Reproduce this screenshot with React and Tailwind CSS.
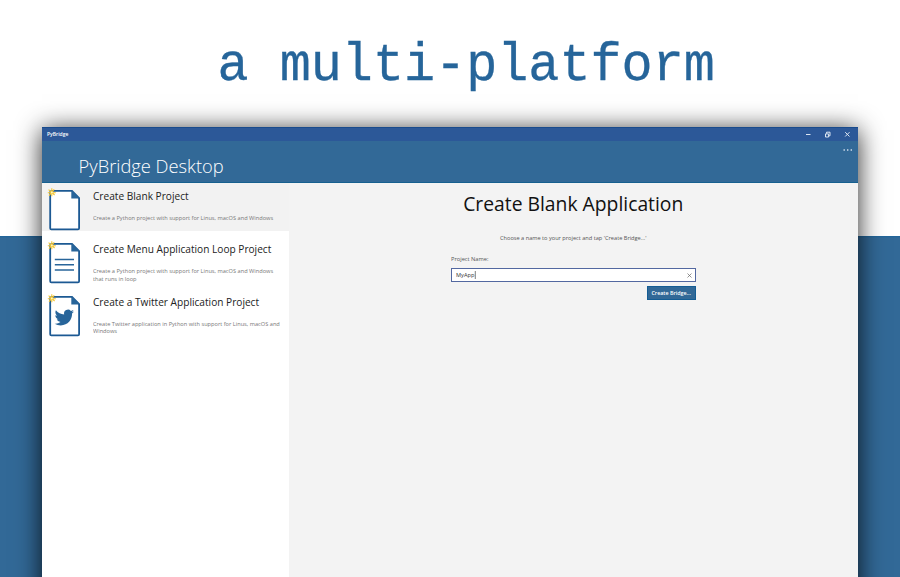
import React from "react";

function FileIcon({ children }) {
  return (
    <svg className="block h-[42px] w-[36px] shrink-0" viewBox="0 0 36 42" fill="none" overflow="visible">
      <path d="M5.5 1.8H25L32.1 9.1V39.3Q32.1 40.4 31 40.4H4.3Q3.2 40.4 3.2 39.3V3.3Q3.2 1.8 5.5 1.8Z" fill="#fff" stroke="#1c5993" strokeWidth="1.8" />
      <path d="M24.3 1.1V9.6H32.9Z" fill="#28659a" />
      {children}
      <path d="M4.8 -0.8V7.2M0.8 3.7H8.8M1.6 0.6L7.6 6M7.2 0.4L2 6.6" stroke="#f4c531" strokeWidth="1.1" />
      <circle cx="4.8" cy="3.4" r="1" fill="#fff6bd" />
    </svg>
  );
}

function Lines() {
  return <path d="M7.8 17.5H27M7.8 22.7H27M7.8 27.9H27" stroke="#28659a" strokeWidth="1.5" />;
}

function Bird() {
  return (
    <g transform="translate(7.6 12.8) scale(.81)">
      <path
        fill="#28659a"
        d="M23.95 4.57a10 10 0 01-2.82.77 4.96 4.96 0 002.16-2.72c-.95.55-2 .96-3.13 1.18a4.92 4.92 0 00-8.38 4.48C7.69 8.1 4.07 6.13 1.64 3.16a4.82 4.82 0 00-.67 2.48c0 1.71.87 3.21 2.19 4.1a4.9 4.9 0 01-2.23-.62v.06a4.92 4.92 0 003.95 4.83 5 5 0 01-2.21.08 4.94 4.94 0 004.6 3.42A9.87 9.87 0 010 19.54a13.99 13.99 0 007.56 2.21c9.05 0 14-7.5 14-13.98 0-.21 0-.42-.02-.63a9.94 9.94 0 002.46-2.55z"
      />
    </g>
  );
}

function Project({ title, lines, icon, className }) {
  return (
    <div className={"flex pl-[5px] " + className}>
      <FileIcon>{icon}</FileIcon>
      <div className="w-[200px] pl-[10px]">
        <div className="h-[26px] origin-left scale-x-[0.92] text-[11px] leading-[14px] whitespace-nowrap text-[#222]">{title}</div>
        <div className="origin-left scale-x-[0.942] text-[6px] leading-[7.5px] whitespace-nowrap text-[#777]">
          {lines.map((line) => (
            <div key={line}>{line}</div>
          ))}
        </div>
      </div>
    </div>
  );
}

export default function App() {
  return (
    <div className="flex h-[577px] w-[900px] flex-col overflow-hidden bg-[linear-gradient(to_bottom,#fff_236px,#1f659b_236px,#326997_238px)] font-['Open_Sans','Noto_Sans',sans-serif]">
      <div className="h-[127px] shrink-0 pt-[35px] pl-[217.5px]">
        <h1 className="origin-top-left scale-y-[1.05] font-['Liberation_Mono',monospace] text-[51.8px] leading-[60px] whitespace-pre text-[#26659a] [-webkit-text-stroke:0.3px_#26659a]">a multi-platform</h1>
      </div>
      <div className="ml-[42px] flex h-[480px] w-[815.5px] shrink-0 flex-col bg-[#f3f3f3] shadow-[0_3px_24px_rgba(0,0,0,0.85)]">
        <div className="flex h-[14px] shrink-0 items-center border-t border-[#1a4b8c] bg-[#2c5898] px-[5px] text-white">
          <span className="text-[5px] leading-none font-semibold">PyBridge</span>
          <svg className="mr-[1.5px] ml-auto h-[8px] w-[46px]" viewBox="0 0 46 8" fill="none" stroke="#dce6f2" strokeWidth="1">
            <path d="M1 3.5H5.5" />
            <path d="M20.5 2.9H23.6V6H20.5ZM21.5 2.6V1.2H25V4.8H23.8" />
            <path d="M40.2 1.2L44.5 5.5M44.5 1.2L40.2 5.5" />
          </svg>
        </div>
        <div className="flex h-[42px] shrink-0 justify-between border-b border-[#16608f] bg-[#326997] text-white">
          <div className="origin-left scale-x-[0.963] pt-[12px] pl-[38px] text-[19px] leading-[26px] font-light whitespace-nowrap">PyBridge Desktop</div>
          <svg className="mt-[8px] mr-[5px] h-[2px] w-[10px]" viewBox="0 0 10 2" fill="#dce6f2">
            <rect x="0.5" y="0.3" width="1.4" height="1.4" />
            <rect x="4" y="0.3" width="1.4" height="1.4" />
            <rect x="7.6" y="0.3" width="1.4" height="1.4" />
          </svg>
        </div>
        <div className="flex min-h-0 flex-1">
          <div className="flex w-[247px] shrink-0 flex-col bg-white">
            <Project className="h-[48px] bg-[#f2f2f2] pt-[6px]" title="Create Blank Project" lines={["Create a Python project with support for Linus, macOS and Windows"]} />
            <Project className="h-[53px] pt-[11px]" title="Create Menu Application Loop Project" icon={<Lines />} lines={["Create a Python project with support for Linus, macOS and Windows", "that runs in loop"]} />
            <Project className="h-[53px] pt-[10.5px]" title="Create a Twitter Application Project" icon={<Bird />} lines={["Create Twitter application in Python with support for Linus, macOS and", "Windows"]} />
          </div>
          <div className="flex flex-1 flex-col pl-[162px]">
            <div className="flex w-[244.5px] flex-col">
              <h2 className="scale-x-[0.965] pt-[6.5px] text-center text-[20px] leading-[28px] whitespace-nowrap text-[#111]">Create Blank Application</h2>
              <p className="mt-[16.5px] scale-x-[0.938] text-center text-[6px] leading-[9px] text-[#555]">Choose a name to your project and tap 'Create Bridge...'</p>
              <label className="mt-[11.5px] origin-left scale-x-95 text-[6px] leading-[9px] text-[#555]">Project Name:</label>
              <div className="mt-[4.5px] flex h-[14px] items-center justify-between border border-[#5368a0] bg-white pr-[3px] pl-[4px]">
                <span className="origin-left scale-x-[0.94] border-r border-[#777] text-[6px] leading-[8px] text-[#333]">MyApp</span>
                <svg className="h-[5px] w-[5px]" viewBox="0 0 5 5" stroke="#666" strokeWidth="0.7">
                  <path d="M.5 .5L4.5 4.5M4.5 .5L.5 4.5" />
                </svg>
              </div>
              <button className="mt-[4px] flex h-[14px] w-[49px] items-center justify-center self-end border border-[#145d94] bg-[#326997] text-[6px] leading-none font-semibold whitespace-nowrap text-white">
                <span className="scale-x-[0.89]">Create Bridge...</span>
              </button>
            </div>
          </div>
        </div>
      </div>
    </div>
  );
}
